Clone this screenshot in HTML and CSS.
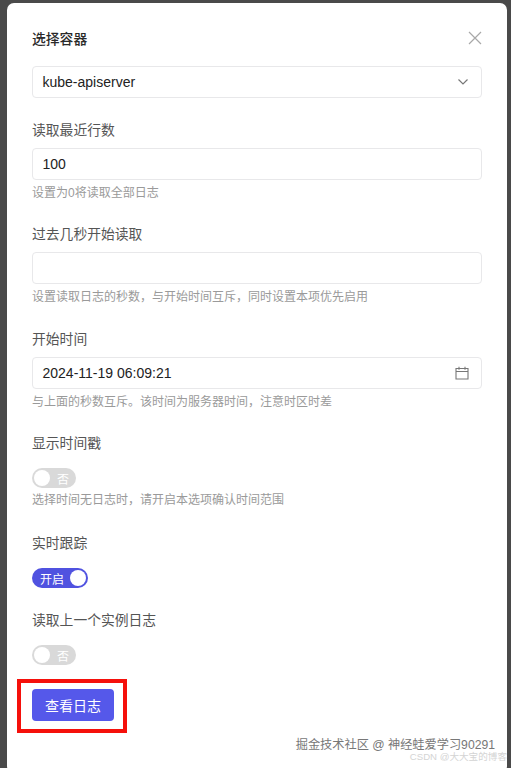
FILE: index.html
```html
<!DOCTYPE html>
<html lang="zh-CN">
<head>
  <meta charset="UTF-8">
  <meta name="viewport" content="width=device-width, initial-scale=1.0">
  <title>选择容器</title>
  <link rel="stylesheet" href="styles.css">
</head>
<body>
  <div class="modal">
    <div class="modal-head">
      <span class="modal-title">选择容器</span>
      <svg class="close" width="16" height="16" viewBox="0 0 16 16"><path d="M2 2l12 12M14 2L2 14" stroke="#a8a8a8" stroke-width="1.2" fill="none"/></svg>
    </div>

    <div class="input select-box">
      <span>kube-apiserver</span>
      <svg width="12" height="8" viewBox="0 0 12 8"><path d="M1.500 1.500L6 6l4.500-4.500" stroke="#777" stroke-width="1.200" fill="none"/></svg>
    </div>

    <div class="field">
      <div class="label">读取最近行数</div>
      <div class="input">100</div>
      <div class="help">设置为0将读取全部日志</div>
    </div>

    <div class="field">
      <div class="label">过去几秒开始读取</div>
      <div class="input"></div>
      <div class="help">设置读取日志的秒数，与开始时间互斥，同时设置本项优先启用</div>
    </div>

    <div class="field field-date">
      <div class="label">开始时间</div>
      <div class="input date-box">
        <span>2024-11-19 06:09:21</span>
        <svg width="14" height="14" viewBox="0 0 14 14"><path d="M1 2.500h12v10.500H1zM1 5.500h12M4 .8v3M10 .8v3" stroke="#777" stroke-width="1.100" fill="none"/></svg>
      </div>
      <div class="help">与上面的秒数互斥。该时间为服务器时间，注意时区时差</div>
    </div>

    <div class="field">
      <div class="label">显示时间戳</div>
      <div class="switch"><i></i><span>否</span></div>
      <div class="help help-tight">选择时间无日志时，请开启本选项确认时间范围</div>
    </div>

    <div class="field field-track">
      <div class="label">实时跟踪</div>
      <div class="switch on"><span>开启</span><i></i></div>
    </div>

    <div class="field">
      <div class="label">读取上一个实例日志</div>
      <div class="switch"><i></i><span>否</span></div>
    </div>

    <div class="btn-wrap">
      <button class="btn">查看日志</button>
    </div>
  </div>

  <div class="mark">掘金技术社区 @ 神经蛙爱学习90291</div>
  <div class="mark-csdn">CSDN @大大宝的博客</div>
</body>
</html>
```

FILE: styles.css
```css
body {
  font-family: "Liberation Sans", "Noto Sans CJK SC", sans-serif;
  background-color: #4a4a4a;
  margin: 0;
  height: 768px;
  overflow: hidden;
  position: relative;
  color: #2b2b2b;
}

.modal {
  margin: 3px 4px 0 7px;
  padding: 0 25px;
  height: 770px;
  box-sizing: border-box;
  background-color: #fff;
  border-radius: 7px;
}

.modal-head {
  display: flex;
  justify-content: space-between;
  align-items: center;
  height: 63px;
  padding: 6px 0 0;
  box-sizing: border-box;
}

.modal-title {
  font-size: 13.800px;
  font-weight: 500;
  color: #2a2a2a;
}

.close {
  margin-right: -1px;
}

.input {
  height: 32px;
  box-sizing: border-box;
  border: 1px solid #e8e8ea;
  border-radius: 4px;
  padding: 0 10px 0 9.500px;
  font-size: 14px;
  line-height: 30px;
  color: #222;
}

.select-box, .date-box {
  display: flex;
  justify-content: space-between;
  align-items: center;
}

.select-box svg {
  margin-right: 2px;
}

.date-box svg {
  margin-right: 2px;
}

.field {
  margin-top: 23px;
}

.field-date {
  margin-top: 24px;
}

.field-track {
  margin-top: 25px;
}

.label {
  font-size: 13.800px;
  line-height: 20px;
  color: #555;
  margin-bottom: 7px;
}

.help {
  font-size: 12px;
  line-height: 18px;
  margin-top: 4px;
  color: #9a9a9a;
}

.help-tight {
  margin-top: 3px;
}

.switch {
  display: inline-flex;
  align-items: center;
  justify-content: space-between;
  width: 44px;
  height: 20px;
  box-sizing: border-box;
  padding: 2px 7px 2px 2px;
  margin-top: 7px;
  border-radius: 10px;
  background-color: #d9d9d9;
  color: #fff;
  font-size: 12px;
  vertical-align: top;
}

.switch i {
  display: block;
  width: 16px;
  height: 16px;
  border-radius: 50%;
  background-color: #fff;
}

.switch.on {
  width: 56px;
  padding: 2px 2px 2px 8px;
  background-color: #5052e0;
}

.btn-wrap {
  margin: 14px 0 0 -15px;
  width: 110px;
  height: 54px;
  box-sizing: border-box;
  border: 4px solid #f5100b;
  padding: 6px 0 0 11px;
}

.btn {
  display: block;
  width: 82px;
  height: 32px;
  padding: 0;
  border: none;
  border-radius: 4px;
  background-color: #5558ea;
  color: #fff;
  font-family: inherit;
  font-size: 14px;
}

.mark {
  position: absolute;
  right: 16px;
  top: 736px;
  font-size: 12.200px;
  line-height: 18px;
  color: #777;
}

.mark-csdn {
  position: absolute;
  right: 4px;
  top: 750px;
  font-size: 9.600px;
  line-height: 14px;
  color: #d4d4d4;
}
```
